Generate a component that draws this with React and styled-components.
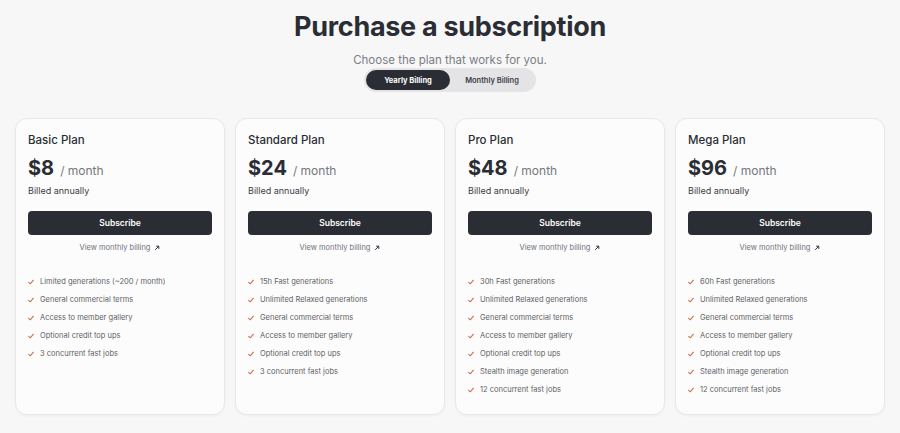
import React from 'react';
import styled, { createGlobalStyle } from 'styled-components';

const GlobalStyle = createGlobalStyle`
  body {
    margin: 0;
    background: #f7f7f8;
    font-family: Inter, "Open Sans", sans-serif;
    color: #2a2d33;
  }
`;

const Page = styled.main`
  width: 900px;
  height: 433px;
  display: flex;
  flex-direction: column;
  align-items: center;
  padding-top: 9px;
  box-sizing: border-box;
`;

const Title = styled.h1`
  margin: 0;
  font-size: 27px;
  font-weight: 700;
  letter-spacing: -0.3px;
  line-height: 36px;
  color: #2a2d33;
`;

const Subtitle = styled.p`
  margin: 8px 0 0;
  font-size: 11.5px;
  line-height: 14px;
  color: #7a7d84;
`;

const Toggle = styled.div`
  margin-top: 1px;
  width: 172px;
  height: 24px;
  box-sizing: border-box;
  padding: 2px;
  border-radius: 12px;
  background: #e4e4e7;
  display: flex;
`;

const ToggleOption = styled.button`
  border: 0;
  border-radius: 10px;
  font-family: inherit;
  font-size: 7.5px;
  font-weight: ${p => (p.$active ? 700 : 600)};
  flex: ${p => (p.$active ? '0 0 84px' : '1')};
  background: ${p => (p.$active ? '#2a2d33' : 'transparent')};
  color: ${p => (p.$active ? '#ffffff' : '#3a3d44')};
  padding: 0;
`;

const Grid = styled.section`
  margin-top: 26px;
  display: grid;
  grid-template-columns: repeat(4, 210px);
  gap: 10px;
`;

const Card = styled.div`
  height: 297px;
  box-sizing: border-box;
  background: #fcfcfc;
  border: 1px solid #e8e8ea;
  border-radius: 12px;
  box-shadow: 0 1px 3px rgba(0, 0, 0, 0.04);
  padding: 13px 12px 0 12px;
  display: flex;
  flex-direction: column;
`;

const PlanName = styled.h2`
  margin: 0;
  font-size: 11.5px;
  font-weight: 500;
  line-height: 16px;
  color: #2a2d33;
`;

const PriceRow = styled.div`
  margin-top: 8px;
  display: flex;
  align-items: baseline;
  gap: 6px;
  line-height: 24px;
`;

const Price = styled.span`
  font-size: 20px;
  font-weight: 700;
  color: #2a2d33;
`;

const Per = styled.span`
  font-size: 12px;
  color: #74777e;
`;

const Billed = styled.div`
  margin-top: 2px;
  font-size: 9px;
  line-height: 12px;
  color: #3a3d44;
`;

const SubscribeButton = styled.button`
  margin-top: 14px;
  height: 24px;
  border: 0;
  border-radius: 4px;
  background: #2a2d33;
  color: #fff;
  font-family: inherit;
  font-size: 8.5px;
  font-weight: 600;
`;

const MonthlyLink = styled.a`
  margin-top: 7px;
  align-self: center;
  font-size: 7.5px;
  line-height: 12px;
  color: #6e7178;
  display: flex;
  align-items: center;
  gap: 4px;
  text-decoration: none;
`;

const Features = styled.ul`
  list-style: none;
  margin: 22px 0 0;
  padding: 0;
  display: flex;
  flex-direction: column;
  gap: 6px;
`;

const Feature = styled.li`
  display: flex;
  align-items: center;
  gap: 6px;
  font-size: 7.5px;
  line-height: 12px;
  color: #5c5f66;
`;

const Check = () => (
  <svg width="6" height="6" viewBox="0 0 10 10">
    <path d="M1 5.5 L3.8 8 L9 2" fill="none" stroke="#c9714f" strokeWidth="1.8" strokeLinecap="round" strokeLinejoin="round" />
  </svg>
);

const Arrow = () => (
  <svg width="6" height="6" viewBox="0 0 10 10">
    <path d="M2 8 L8 2 M3.5 2 H8 V6.5" fill="none" stroke="#2a2d33" strokeWidth="1.6" />
  </svg>
);

const plans = [
  {
    name: 'Basic Plan',
    price: '$8',
    features: [
      'Limited generations (~200 / month)',
      'General commercial terms',
      'Access to member gallery',
      'Optional credit top ups',
      '3 concurrent fast jobs',
    ],
  },
  {
    name: 'Standard Plan',
    price: '$24',
    features: [
      '15h Fast generations',
      'Unlimited Relaxed generations',
      'General commercial terms',
      'Access to member gallery',
      'Optional credit top ups',
      '3 concurrent fast jobs',
    ],
  },
  {
    name: 'Pro Plan',
    price: '$48',
    features: [
      '30h Fast generations',
      'Unlimited Relaxed generations',
      'General commercial terms',
      'Access to member gallery',
      'Optional credit top ups',
      'Stealth image generation',
      '12 concurrent fast jobs',
    ],
  },
  {
    name: 'Mega Plan',
    price: '$96',
    features: [
      '60h Fast generations',
      'Unlimited Relaxed generations',
      'General commercial terms',
      'Access to member gallery',
      'Optional credit top ups',
      'Stealth image generation',
      '12 concurrent fast jobs',
    ],
  },
];

const App = () => {
  return (
    <>
      <GlobalStyle />
      <Page>
        <Title>Purchase a subscription</Title>
        <Subtitle>Choose the plan that works for you.</Subtitle>
        <Toggle>
          <ToggleOption $active>Yearly Billing</ToggleOption>
          <ToggleOption>Monthly Billing</ToggleOption>
        </Toggle>
        <Grid>
          {plans.map(plan => (
            <Card key={plan.name}>
              <PlanName>{plan.name}</PlanName>
              <PriceRow>
                <Price>{plan.price}</Price>
                <Per>/ month</Per>
              </PriceRow>
              <Billed>Billed annually</Billed>
              <SubscribeButton>Subscribe</SubscribeButton>
              <MonthlyLink href="#">
                View monthly billing <Arrow />
              </MonthlyLink>
              <Features>
                {plan.features.map(f => (
                  <Feature key={f}>
                    <Check />
                    {f}
                  </Feature>
                ))}
              </Features>
            </Card>
          ))}
        </Grid>
      </Page>
    </>
  );
};

export default App;
